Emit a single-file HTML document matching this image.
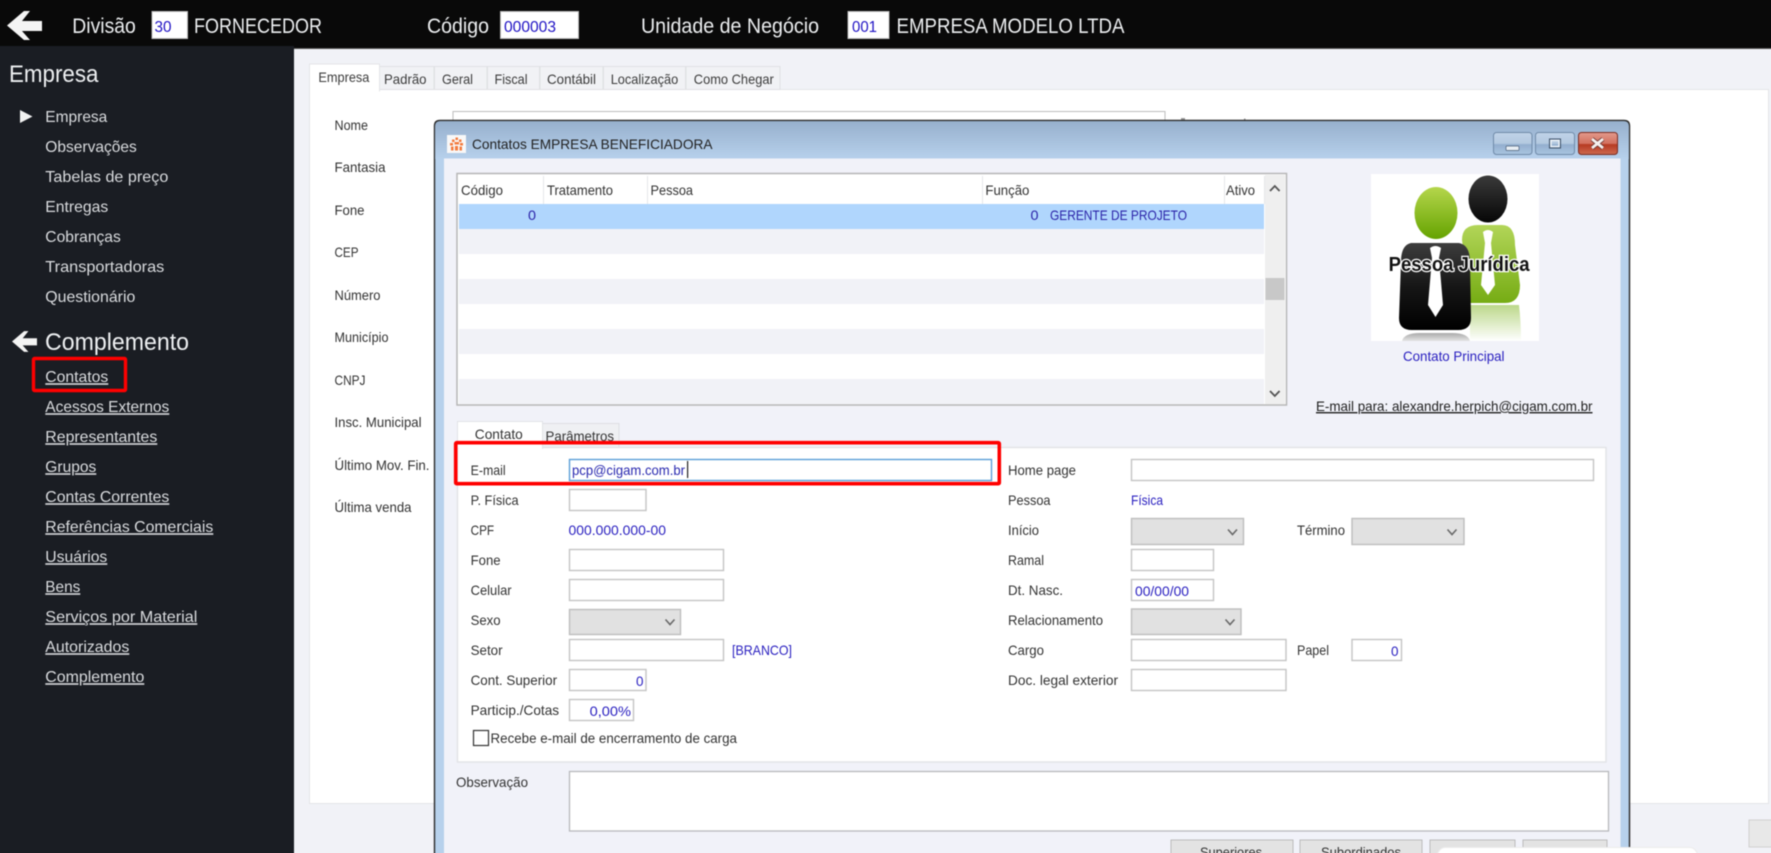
<!DOCTYPE html>
<html lang="pt-BR"><head><meta charset="utf-8"><title>Contatos</title>
<style>
html,body{margin:0;padding:0;width:1771px;height:853px;overflow:hidden;background:#1a1d23}
#w{position:relative;width:1771px;height:853px;overflow:hidden;contain:paint}
svg{display:block;position:absolute;left:-10px;top:-10px;filter:blur(.45px)}
text{font-family:"Liberation Sans",sans-serif;white-space:pre}
.t{font-size:21px;fill:#eceef0}
.v{font-size:16px;fill:#1f12c4}
.h{font-size:24px;fill:#eef0f2}
.s{font-size:16px;fill:#d9dbde}
.u{font-size:16px;fill:#d9dbde;text-decoration:underline}
.l{font-size:14px;fill:#333}
.tb{font-size:14px;fill:#3c3c3c}
.b{font-size:14px;fill:#2a20c0}
.i{fill:#fff;stroke:#c4c4c4;stroke-width:1.4}
.c{fill:#e1e1e1;stroke:#bdbdbd;stroke-width:1.4}
.ch{fill:none;stroke:#6a6a6a;stroke-width:1.6}
.tab{fill:#f1f2f5;stroke:#e0e1e4;stroke-width:1}
</style></head><body>
<div id="w">
<svg width="1791" height="873" viewBox="-10 -10 1791 873" xmlns="http://www.w3.org/2000/svg">
<defs>
<linearGradient id="tg" x1="0" y1="0" x2="0" y2="1"><stop offset="0" stop-color="#97b0cd"/><stop offset="1" stop-color="#b7d1ec"/></linearGradient>
<linearGradient id="bb" x1="0" y1="0" x2="0" y2="1"><stop offset="0" stop-color="#c0d3e8"/><stop offset=".5" stop-color="#b4c9e0"/><stop offset=".55" stop-color="#93afcf"/><stop offset="1" stop-color="#a9c4e0"/></linearGradient>
<linearGradient id="br" x1="0" y1="0" x2="0" y2="1"><stop offset="0" stop-color="#e39a8c"/><stop offset=".5" stop-color="#d2705e"/><stop offset=".55" stop-color="#b73a22"/><stop offset="1" stop-color="#cc6a50"/></linearGradient>
<linearGradient id="gh" x1="0" y1="0" x2="0" y2="1"><stop offset="0" stop-color="#b5d64c"/><stop offset="1" stop-color="#65a300"/></linearGradient>
<linearGradient id="gb" x1="0" y1="0" x2="0" y2="1"><stop offset="0" stop-color="#b2d558"/><stop offset="1" stop-color="#76ac14"/></linearGradient>
<linearGradient id="kh" x1="0" y1="0" x2="0" y2="1"><stop offset="0" stop-color="#3a3a3a"/><stop offset="1" stop-color="#060606"/></linearGradient>
<linearGradient id="kb" x1="0" y1="0" x2="0" y2="1"><stop offset="0" stop-color="#3d3d3d"/><stop offset=".5" stop-color="#161616"/><stop offset="1" stop-color="#000"/></linearGradient>
<linearGradient id="gr" x1="0" y1="0" x2="0" y2="1"><stop offset="0" stop-color="#bcd88a"/><stop offset="1" stop-color="#fff"/></linearGradient>
<linearGradient id="kr" x1="0" y1="0" x2="0" y2="1"><stop offset="0" stop-color="#aaa"/><stop offset="1" stop-color="#e4e4e4"/></linearGradient>
</defs>

<!-- main background -->
<rect x="-10" y="-10" width="1791" height="873" fill="#f1f2f7"/>
<rect x="309.500" y="89.500" width="1459" height="714" fill="#fff" stroke="#e4e5e8"/>

<!-- top bar -->
<rect x="-10" y="-10" width="1791" height="58" fill="#090909"/>
<rect x="-10" y="48" width="1791" height="1" fill="#555"/>
<path d="M7 25.500 L24 11 H30 L22 21 H42 V31 H22 L30 40 H24 Z" fill="#f4f4f4"/>
<text class="t" x="72.300" y="33" textLength="63.500" lengthAdjust="spacingAndGlyphs">Divisão</text>
<rect x="152" y="11.500" width="35.500" height="27" fill="#fff" stroke="#bbb"/>
<text class="v" x="154.500" y="32" textLength="17" lengthAdjust="spacingAndGlyphs">30</text>
<text class="t" x="194" y="33" textLength="128" lengthAdjust="spacingAndGlyphs">FORNECEDOR</text>
<text class="t" x="427" y="33" textLength="62" lengthAdjust="spacingAndGlyphs">Código</text>
<rect x="500.500" y="11.500" width="78" height="27" fill="#fff" stroke="#bbb"/>
<text class="v" x="504" y="32" textLength="52" lengthAdjust="spacingAndGlyphs">000003</text>
<text class="t" x="641" y="33" textLength="178" lengthAdjust="spacingAndGlyphs">Unidade de Negócio</text>
<rect x="848" y="11.500" width="41" height="27" fill="#fff" stroke="#bbb"/>
<text class="v" x="852" y="32" textLength="25" lengthAdjust="spacingAndGlyphs">001</text>
<text class="t" x="896.500" y="33" textLength="228" lengthAdjust="spacingAndGlyphs">EMPRESA MODELO LTDA</text>

<!-- sidebar -->
<rect x="-10" y="46" width="304" height="817" fill="#1a1d23"/>
<text class="h" x="9" y="82" textLength="89.500" lengthAdjust="spacingAndGlyphs">Empresa</text>
<path d="M20 110 L32.500 116.500 L20 123 Z" fill="#f2f2f2"/>
<g transform="translate(-.2 -.8)">
<text class="s" x="45.500" y="123" textLength="62" lengthAdjust="spacingAndGlyphs">Empresa</text>
<text class="s" x="45.500" y="153" textLength="91.500" lengthAdjust="spacingAndGlyphs">Observações</text>
<text class="s" x="45.500" y="183" textLength="123" lengthAdjust="spacingAndGlyphs">Tabelas de preço</text>
<text class="s" x="45.500" y="213" textLength="63" lengthAdjust="spacingAndGlyphs">Entregas</text>
<text class="s" x="45.500" y="243" textLength="75.500" lengthAdjust="spacingAndGlyphs">Cobranças</text>
<text class="s" x="45.500" y="273" textLength="119" lengthAdjust="spacingAndGlyphs">Transportadoras</text>
<text class="s" x="45.500" y="303" textLength="90" lengthAdjust="spacingAndGlyphs">Questionário</text>
</g>
<path transform="translate(7 323.300) scale(.714)" d="M7 25.500 L24 11 H30 L22 21 H42 V31 H22 L30 40 H24 Z" fill="#f4f4f4"/>
<text class="h" x="45" y="350" textLength="144" lengthAdjust="spacingAndGlyphs">Complemento</text>
<g transform="translate(-.2 -.8)">
<text class="u" x="45.500" y="383" textLength="63" lengthAdjust="spacingAndGlyphs">Contatos</text>
<text class="u" x="45.500" y="413" textLength="124" lengthAdjust="spacingAndGlyphs">Acessos Externos</text>
<text class="u" x="45.500" y="443" textLength="112" lengthAdjust="spacingAndGlyphs">Representantes</text>
<text class="u" x="45.500" y="473" textLength="51" lengthAdjust="spacingAndGlyphs">Grupos</text>
<text class="u" x="45.500" y="503" textLength="124" lengthAdjust="spacingAndGlyphs">Contas Correntes</text>
<text class="u" x="45.500" y="533" textLength="168" lengthAdjust="spacingAndGlyphs">Referências Comerciais</text>
<text class="u" x="45.500" y="563" textLength="62" lengthAdjust="spacingAndGlyphs">Usuários</text>
<text class="u" x="45.500" y="593" textLength="35" lengthAdjust="spacingAndGlyphs">Bens</text>
<text class="u" x="45.500" y="623" textLength="152" lengthAdjust="spacingAndGlyphs">Serviços por Material</text>
<text class="u" x="45.500" y="653" textLength="84" lengthAdjust="spacingAndGlyphs">Autorizados</text>
<text class="u" x="45.500" y="683" textLength="99" lengthAdjust="spacingAndGlyphs">Complemento</text>
</g>
<rect x="33.500" y="358.500" width="92" height="32" fill="none" stroke="#f00" stroke-width="3.400" rx="1"/>

<!-- main tabs -->
<rect class="tab" x="379.500" y="66.500" width="54.500" height="23"/>
<rect class="tab" x="434.500" y="66.500" width="52.500" height="23"/>
<rect class="tab" x="487.500" y="66.500" width="52" height="23"/>
<rect class="tab" x="540" y="66.500" width="63" height="23"/>
<rect class="tab" x="603.500" y="66.500" width="82" height="23"/>
<rect class="tab" x="686" y="66.500" width="94" height="23"/>
<rect x="309.500" y="64" width="70" height="27" fill="#fff" stroke="#e4e5e8"/>
<rect x="310" y="88" width="69" height="4" fill="#fff"/>
<text class="tb" x="318.400" y="82" textLength="51" lengthAdjust="spacingAndGlyphs">Empresa</text>
<text class="tb" x="384" y="84" textLength="42.500" lengthAdjust="spacingAndGlyphs">Padrão</text>
<text class="tb" x="442" y="84" textLength="31" lengthAdjust="spacingAndGlyphs">Geral</text>
<text class="tb" x="494.500" y="84" textLength="33" lengthAdjust="spacingAndGlyphs">Fiscal</text>
<text class="tb" x="547" y="84" textLength="49" lengthAdjust="spacingAndGlyphs">Contábil</text>
<text class="tb" x="610.700" y="84" textLength="67.500" lengthAdjust="spacingAndGlyphs">Localização</text>
<text class="tb" x="693.800" y="84" textLength="80" lengthAdjust="spacingAndGlyphs">Como Chegar</text>

<!-- main labels -->
<text class="l" x="334.500" y="130" textLength="33.500" lengthAdjust="spacingAndGlyphs">Nome</text>
<text class="l" x="334.500" y="172" textLength="51" lengthAdjust="spacingAndGlyphs">Fantasia</text>
<text class="l" x="334.500" y="215" textLength="30" lengthAdjust="spacingAndGlyphs">Fone</text>
<text class="l" x="334.500" y="257" textLength="24" lengthAdjust="spacingAndGlyphs">CEP</text>
<text class="l" x="334.500" y="300" textLength="46" lengthAdjust="spacingAndGlyphs">Número</text>
<text class="l" x="334.500" y="342" textLength="54" lengthAdjust="spacingAndGlyphs">Município</text>
<text class="l" x="334.500" y="385" textLength="31" lengthAdjust="spacingAndGlyphs">CNPJ</text>
<text class="l" x="334.500" y="427" textLength="87" lengthAdjust="spacingAndGlyphs">Insc. Municipal</text>
<text class="l" x="334.500" y="470" textLength="95" lengthAdjust="spacingAndGlyphs">Último Mov. Fin.</text>
<text class="l" x="334.500" y="512" textLength="77" lengthAdjust="spacingAndGlyphs">Última venda</text>
<rect x="453" y="111.500" width="712" height="20" fill="#fff" stroke="#bdbdbd"/>
<rect x="1181" y="118" width="4" height="2" fill="#999"/>
<rect x="1244" y="118.500" width="1.500" height="1.500" fill="#999"/>

<!-- dialog -->
<path d="M434.500 863 V126 Q434.500 120.500 440 120.500 H1624 Q1629.500 120.500 1629.500 126 V863 Z" fill="#b7d1ec" stroke="#2a2a2a" stroke-width="1.400"/>
<path d="M435.200 159 V126 Q435.200 121.200 440 121.200 H1624 Q1628.800 121.200 1628.800 126 V159 Z" fill="url(#tg)"/>
<rect x="444" y="158.500" width="1176.500" height="705" fill="#f1f2f9"/>
<rect x="447" y="135" width="19" height="18" fill="#f8f8f8"/>
<g fill="#f37b3e"><path d="M455.500 137.500 h2.500 v2.500 h-2.500z M452 139.500 h2.500 v2.500 h-2.500z M459 139.500 h2.500 v2.500 h-2.500z M450 143 h3 v2.500 h-3z M454.500 142 h4.500 v2.500 h-4.500z M460 143 h3 v2.500 h-3z M451 146.500 h2.500 v4 h-2.500z M455 146 h3 v4.500 h-3z M459.500 146.500 h2.500 v4 h-2.500z"/></g>
<text class="l" x="472" y="149" textLength="240.500" lengthAdjust="spacingAndGlyphs" style="fill:#222">Contatos EMPRESA BENEFICIADORA</text>

<!-- window buttons -->
<rect x="1493.500" y="132.500" width="38.500" height="22" rx="3" fill="url(#bb)" stroke="#6f8aa8"/>
<rect x="1506" y="146" width="13" height="4.500" rx="1" fill="#e8eef4" stroke="#4a5f78" stroke-width=".7"/>
<rect x="1535.500" y="132.500" width="39" height="22" rx="3" fill="url(#bb)" stroke="#6f8aa8"/>
<rect x="1549.500" y="139" width="11" height="9" fill="none" stroke="#3f5269" stroke-width="1"/>
<rect x="1551" y="140.500" width="8" height="6" fill="none" stroke="#eef3f8" stroke-width="1.400"/>
<rect x="1578.500" y="132.500" width="39" height="22" rx="3" fill="url(#br)" stroke="#7a2c22"/>
<path d="M1592 139 L1603 148 M1603 139 L1592 148" stroke="#6b3530" stroke-width="4.400"/>
<path d="M1592 139 L1603 148 M1603 139 L1592 148" stroke="#f4f0ee" stroke-width="2.800"/>

<!-- grid -->
<rect x="457" y="173.500" width="829.500" height="231.500" fill="#fff" stroke="#b6b6b6" stroke-width="1.500"/>
<rect x="459" y="204" width="805" height="25" fill="#b0d6fd"/>
<rect x="459" y="229" width="805" height="25" fill="#f1f2f7"/>
<rect x="459" y="279" width="805" height="25" fill="#f1f2f7"/>
<rect x="459" y="329" width="805" height="25" fill="#f1f2f7"/>
<rect x="459" y="379" width="805" height="25" fill="#f1f2f7"/>
<g fill="#e6e7ea"><rect x="543" y="176" width="1" height="28"/><rect x="647" y="176" width="1" height="28"/><rect x="982" y="176" width="1" height="28"/><rect x="1224" y="176" width="1" height="28"/><rect x="1264" y="176" width="1" height="28"/></g>
<text class="l" x="461" y="195" textLength="42" lengthAdjust="spacingAndGlyphs">Código</text>
<text class="l" x="547" y="195" textLength="66" lengthAdjust="spacingAndGlyphs">Tratamento</text>
<text class="l" x="650.500" y="195" textLength="42.500" lengthAdjust="spacingAndGlyphs">Pessoa</text>
<text class="l" x="985.400" y="195" textLength="44" lengthAdjust="spacingAndGlyphs">Função</text>
<text class="l" x="1226" y="195" textLength="29" lengthAdjust="spacingAndGlyphs">Ativo</text>
<text class="b" x="528" y="220" textLength="8" lengthAdjust="spacingAndGlyphs" style="fill:#2a22a8">0</text>
<text class="b" x="1030.500" y="220" textLength="8" lengthAdjust="spacingAndGlyphs" style="fill:#2a22a8">0</text>
<text class="b" x="1050" y="220" textLength="137" lengthAdjust="spacingAndGlyphs" style="fill:#2a22a8">GERENTE DE PROJETO</text>
<rect x="1265" y="175" width="20" height="229" fill="#efefef"/>
<rect x="1265.500" y="278" width="19" height="22" fill="#c8c8c8"/>
<path d="M1270 191 L1274.800 186 L1279.600 191" fill="none" stroke="#555" stroke-width="1.800"/>
<path d="M1270 391 L1274.800 396 L1279.600 391" fill="none" stroke="#555" stroke-width="1.800"/>

<!-- logo -->
<rect x="1371" y="174" width="168" height="167" fill="#fff"/>
<path d="M1470 305 H1519 Q1521 322 1521 341 H1470 Z" fill="url(#gr)"/>
<path d="M1402 341 Q1404 333 1420 333 H1452 Q1468 333 1470 341 Z" fill="url(#kr)"/>
<path d="M1462 240 Q1462 225 1478 225 H1502 Q1515 225 1515 245 L1520 285 Q1520 303 1505 303 H1470 Z" fill="url(#gb)"/>
<path d="M1483 232 Q1488 228 1493 232 L1491 243 L1495 285 L1488 295 L1481 285 L1485 243 Z" fill="#fff"/>
<ellipse cx="1488" cy="199" rx="19.500" ry="23.500" fill="url(#kh)"/>
<ellipse cx="1436" cy="213" rx="21.500" ry="26" fill="url(#gh)"/>
<path d="M1411 243 H1459 Q1470 245 1470 262 L1471 318 Q1471 330 1458 330 H1412 Q1399 330 1399 318 L1401 262 Q1401 245 1411 243 Z" fill="url(#kb)"/>
<path d="M1430 248 Q1435.500 244 1441 248 L1439 258 L1443 305 L1435.500 317 L1428 305 L1432 258 Z" fill="#fff"/>
<text x="1388.600" y="271" textLength="141" lengthAdjust="spacingAndGlyphs" style="font-size:20px;font-weight:bold;fill:#111;stroke:#fff;stroke-width:2.500px;paint-order:stroke">Pessoa Jurídica</text>

<text class="b" x="1403" y="361" textLength="101.500" lengthAdjust="spacingAndGlyphs">Contato Principal</text>
<text class="l" x="1316" y="411" textLength="276.500" lengthAdjust="spacingAndGlyphs" style="fill:#222;text-decoration:underline">E-mail para: alexandre.herpich@cigam.com.br</text>

<!-- subtabs and panel -->
<rect x="542.500" y="423.500" width="76.500" height="24" fill="#eff0f3" stroke="#dedfe3"/>
<rect x="457.500" y="447.500" width="1148.500" height="314.500" fill="#fff" stroke="#e2e3e7" stroke-width="1.400"/>
<rect x="457.500" y="421.500" width="85" height="27" fill="#fff" stroke="#e2e3e7"/>
<rect x="458.500" y="446" width="83.500" height="4" fill="#fff"/>
<text class="l" x="474.800" y="439" textLength="48" lengthAdjust="spacingAndGlyphs">Contato</text>
<text class="l" x="545.500" y="441" textLength="68.500" lengthAdjust="spacingAndGlyphs">Parâmetros</text>

<text class="l" x="470.600" y="475" textLength="35" lengthAdjust="spacingAndGlyphs">E-mail</text>
<text class="l" x="470.600" y="505" textLength="48" lengthAdjust="spacingAndGlyphs">P. Física</text>
<text class="l" x="470.600" y="535" textLength="23.500" lengthAdjust="spacingAndGlyphs">CPF</text>
<text class="l" x="470.600" y="565" textLength="30" lengthAdjust="spacingAndGlyphs">Fone</text>
<text class="l" x="470.600" y="595" textLength="41" lengthAdjust="spacingAndGlyphs">Celular</text>
<text class="l" x="470.600" y="625" textLength="30" lengthAdjust="spacingAndGlyphs">Sexo</text>
<text class="l" x="470.600" y="655" textLength="32" lengthAdjust="spacingAndGlyphs">Setor</text>
<text class="l" x="470.600" y="685" textLength="86.500" lengthAdjust="spacingAndGlyphs">Cont. Superior</text>
<text class="l" x="470.600" y="715" textLength="88.500" lengthAdjust="spacingAndGlyphs">Particip./Cotas</text>

<rect x="569.500" y="459.500" width="422" height="21" fill="#fff" stroke="#5b9fd8" stroke-width="1.400"/>
<text class="b" x="572" y="475" textLength="113" lengthAdjust="spacingAndGlyphs" style="fill:#2a2ab0">pcp@cigam.com.br</text>
<rect x="687" y="461" width="1.200" height="17" fill="#222"/>

<rect class="i" x="569.500" y="489.500" width="76.500" height="21"/>
<text class="b" x="568.500" y="535" textLength="97.500" lengthAdjust="spacingAndGlyphs">000.000.000-00</text>
<rect class="i" x="569.500" y="549.500" width="154" height="21"/>
<rect class="i" x="569.500" y="579.500" width="154" height="21"/>
<rect class="c" x="569.500" y="609.500" width="111" height="25"/>
<path class="ch" d="M665.500 619.500 L670 624.500 L674.500 619.500"/>
<rect class="i" x="569.500" y="639.500" width="154" height="21"/>
<text class="b" x="732" y="655" textLength="60" lengthAdjust="spacingAndGlyphs">[BRANCO]</text>
<rect class="i" x="569.500" y="669.500" width="76.500" height="21"/>
<text class="b" x="636" y="686" textLength="7.500" lengthAdjust="spacingAndGlyphs">0</text>
<rect class="i" x="569.500" y="699.500" width="64" height="21"/>
<text class="b" x="589.600" y="716" textLength="41.400" lengthAdjust="spacingAndGlyphs">0,00%</text>
<rect x="473.500" y="730.500" width="15" height="15" fill="#fff" stroke="#333" stroke-width="1.200"/>
<text class="l" x="490.500" y="743" textLength="246.500" lengthAdjust="spacingAndGlyphs">Recebe e-mail de encerramento de carga</text>

<text class="l" x="1008" y="475" textLength="68" lengthAdjust="spacingAndGlyphs">Home page</text>
<text class="l" x="1008" y="505" textLength="42.500" lengthAdjust="spacingAndGlyphs">Pessoa</text>
<text class="l" x="1008" y="535" textLength="31" lengthAdjust="spacingAndGlyphs">Início</text>
<text class="l" x="1008" y="565" textLength="36" lengthAdjust="spacingAndGlyphs">Ramal</text>
<text class="l" x="1008" y="595" textLength="55" lengthAdjust="spacingAndGlyphs">Dt. Nasc.</text>
<text class="l" x="1008" y="625" textLength="95" lengthAdjust="spacingAndGlyphs">Relacionamento</text>
<text class="l" x="1008" y="655" textLength="36" lengthAdjust="spacingAndGlyphs">Cargo</text>
<text class="l" x="1008" y="685" textLength="110" lengthAdjust="spacingAndGlyphs">Doc. legal exterior</text>

<rect class="i" x="1131.500" y="459.500" width="462" height="21"/>
<text class="b" x="1131" y="505" textLength="32" lengthAdjust="spacingAndGlyphs">Física</text>
<rect class="c" x="1131.500" y="518.500" width="112" height="26"/>
<path class="ch" d="M1228 529.500 L1232.500 534.500 L1237 529.500"/>
<text class="l" x="1297" y="535" textLength="48" lengthAdjust="spacingAndGlyphs">Término</text>
<rect class="c" x="1352" y="518.500" width="112" height="26"/>
<path class="ch" d="M1447.500 529.500 L1452 534.500 L1456.500 529.500"/>
<rect class="i" x="1131.500" y="549.500" width="82" height="21"/>
<rect class="i" x="1131.500" y="579.500" width="82" height="21"/>
<text class="b" x="1135" y="596" textLength="54" lengthAdjust="spacingAndGlyphs">00/00/00</text>
<rect class="c" x="1131.500" y="609" width="109.500" height="25.500"/>
<path class="ch" d="M1225.500 619.500 L1230 624.500 L1234.500 619.500"/>
<rect class="i" x="1131.500" y="639.500" width="154.500" height="21"/>
<text class="l" x="1297" y="655" textLength="32" lengthAdjust="spacingAndGlyphs">Papel</text>
<rect class="i" x="1352" y="639.500" width="49.500" height="21"/>
<text class="b" x="1391" y="656" textLength="7.500" lengthAdjust="spacingAndGlyphs">0</text>
<rect class="i" x="1131.500" y="669.500" width="154.500" height="21"/>

<text class="l" x="456" y="787" textLength="72" lengthAdjust="spacingAndGlyphs">Observação</text>
<rect x="569.500" y="771.500" width="1039" height="59.500" fill="#fff" stroke="#b8b9bc" stroke-width="1.300"/>

<!-- bottom buttons -->
<rect x="1171" y="840" width="122" height="24" fill="#e3e3e3" stroke="#bbb"/>
<rect x="1300" y="840" width="122" height="24" fill="#e3e3e3" stroke="#bbb"/>
<rect x="1430" y="840" width="85" height="24" fill="#e3e3e3" stroke="#bbb"/>
<rect x="1523" y="840" width="84" height="24" fill="#e3e3e3" stroke="#bbb"/>
<text class="l" x="1200" y="857" textLength="62" lengthAdjust="spacingAndGlyphs">Superiores</text>
<text class="l" x="1321" y="857" textLength="80" lengthAdjust="spacingAndGlyphs">Subordinados</text>

<!-- lower right -->
<rect x="1749" y="820" width="32" height="27" fill="#e8e8e8" stroke="#d0d0d0"/>
<rect x="1437.500" y="847.500" width="260" height="24" rx="8" fill="#fff" stroke="#ececec"/>

<!-- red highlight on the dialog -->
<rect x="455.700" y="442.700" width="543.600" height="41" fill="none" stroke="#f00" stroke-width="3.600" rx="1"/>
</svg>
</div>
</body></html>
